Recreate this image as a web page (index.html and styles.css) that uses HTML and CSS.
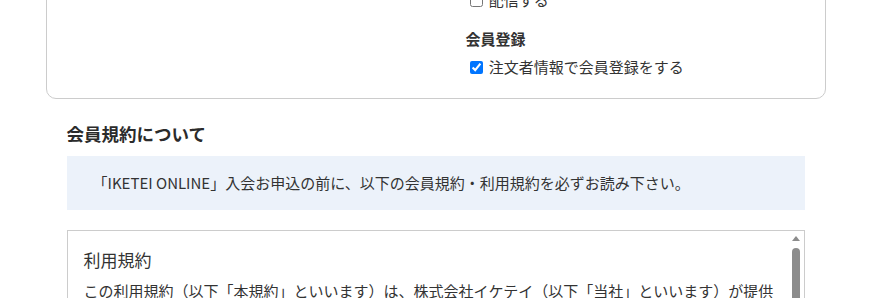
FILE: index.html
```html
<!DOCTYPE html>
<html lang="ja">

<head>
    <meta charset="UTF-8">
    <meta name="viewport" content="width=device-width, initial-scale=1.0">
    <title>会員登録</title>
    <link rel="stylesheet" href="styles.css">
</head>

<body>
    <div class="wrap">
        <div class="card">
            <div class="fields">
                <div class="field">
                    <p class="field-title">メールマガジン</p>
                    <label class="check"><input type="checkbox"> 配信する</label>
                </div>
                <div class="field">
                    <p class="field-title">会員登録</p>
                    <label class="check"><input type="checkbox" checked> 注文者情報で会員登録をする</label>
                </div>
            </div>
        </div>

        <div class="terms">
            <h2 class="terms-title">会員規約について</h2>
            <p class="notice">「IKETEI ONLINE」入会お申込の前に、以下の会員規約・利用規約を必ずお読み下さい。</p>
            <div class="terms-box">
                <div class="terms-body">
                    <h3>利用規約</h3>
                    <p>この利用規約（以下「本規約」といいます）は、株式会社イケテイ（以下「当社」といいます）が提供する「IKETEI ONLINE」（以下「本サービス」といいます）の利用条件を定めるものです。</p>
                </div>
                <div class="bar">
                    <span class="bar-up"></span>
                    <span class="bar-thumb"></span>
                </div>
            </div>
        </div>
    </div>
</body>

</html>
```

FILE: styles.css
```css
body,
h2,
h3,
p {
    margin: 0;
    padding: 0;
}

body {
    font-family: "Noto Sans CJK JP", "Noto Sans", sans-serif;
    color: #333;
    background: #fff;
    font-size: 15px;
}

.wrap {
    width: 780px;
    margin: 0 auto;
}

.card {
    margin-top: -60px;
    border: 1px solid #ccc;
    border-radius: 10px;
    padding: 20px 20px 19px 419px;
}

.fields {
    display: flex;
    flex-direction: column;
    gap: 16px;
}

.field-title {
    font-weight: bold;
    line-height: 22px;
    margin-bottom: 5px;
}

.check {
    display: block;
    line-height: 24px;
}

.check input {
    margin: 0 3px 0 4px;
    vertical-align: -1px;
}

.terms {
    padding: 22px 21px 0 21px;
}

.terms-title {
    font-size: 17.5px;
    line-height: 26px;
    font-weight: bold;
    color: #2b2b2b;
}

.notice {
    margin-top: 9px;
    background: #ecf2fa;
    padding: 15px 26px;
    line-height: 24px;
}

.terms-box {
    position: relative;
    margin-top: 20px;
    height: 300px;
    border: 1px solid #ccc;
    overflow: hidden;
}

.terms-body {
    padding: 16px 12px 16px 16px;
    margin-right: 15px;
}

.terms-body h3 {
    font-size: 17px;
    font-weight: normal;
    line-height: 26px;
}

.terms-body p {
    margin-top: 6px;
    line-height: 24px;
}

.bar {
    position: absolute;
    top: 0;
    right: 0;
    width: 15px;
    height: 100%;
}

.bar-up {
    display: block;
    width: 0;
    height: 0;
    margin: 5px auto 0;
    border-left: 4px solid transparent;
    border-right: 4px solid transparent;
    border-bottom: 5px solid #8c8c8c;
}

.bar-thumb {
    display: block;
    width: 8px;
    height: 120px;
    margin: 7px auto 0;
    background: #8c8c8c;
    border-radius: 4px;
}
```
